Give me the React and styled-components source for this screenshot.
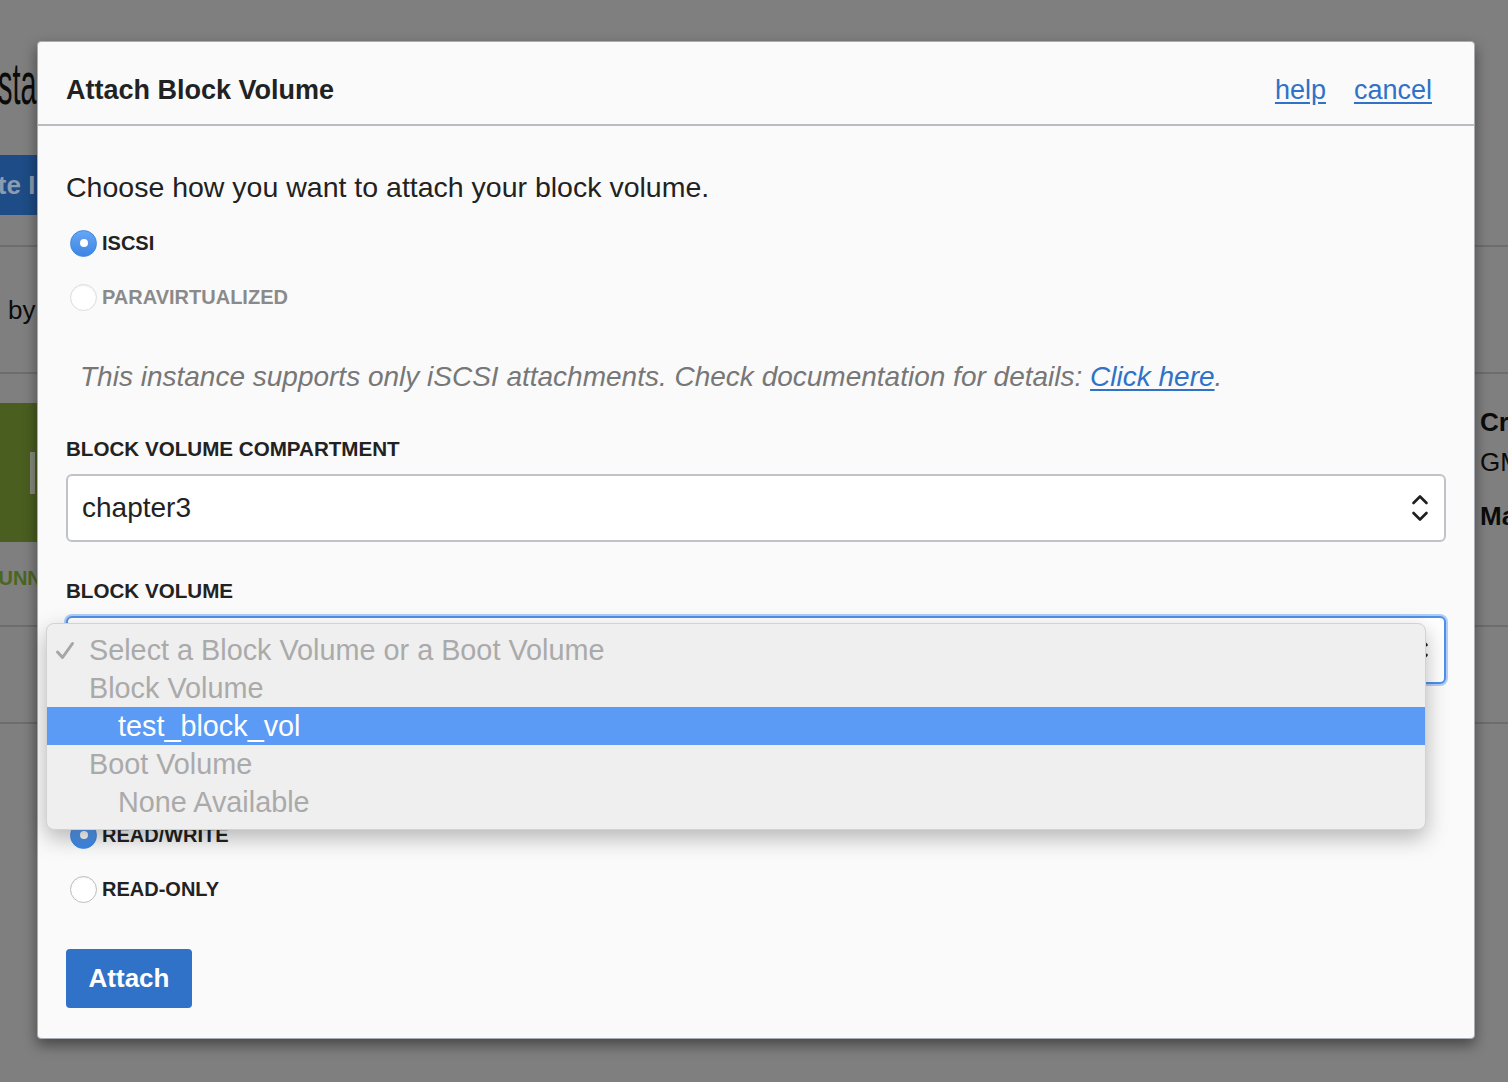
import React from "react";
import styled, { createGlobalStyle } from "styled-components";

const GlobalStyle = createGlobalStyle`
  html, body {
    margin: 0;
    padding: 0;
  }
  body {
    font-family: "Liberation Sans", Arial, Helvetica, sans-serif;
    background: #7f7f7f;
  }
  * {
    box-sizing: border-box;
  }
`;

/* ---------- dimmed page behind the dialog ---------- */

const Page = styled.div`
  position: relative;
  width: 1508px;
  height: 1082px;
  overflow: hidden;
  background: #7f7f7f;
  color: #0b0b0b;
`;

const PageSection = styled.section`
  height: ${(p) => p.$height}px;
  border-bottom: 2px solid #6d6d6d;
  display: flex;
  flex-direction: column;
`;

const PageHeading = styled.h1`
  margin: 54px 0 0 -26px;
  font-size: 60px;
  line-height: 60px;
  font-weight: 400;
  white-space: nowrap;
  transform: scaleX(0.48);
  transform-origin: left center;
`;

const PageButton = styled.div`
  margin: 41px 0 0 -76px;
  width: 260px;
  height: 60px;
  padding: 0 16px;
  display: flex;
  align-items: center;
  background: #1d4c86;
  color: #8d9bb0;
  font-size: 26px;
  font-weight: 700;
  white-space: nowrap;
`;

const PageText = styled.div`
  margin: ${(p) => p.$margin || "0"};
  font-size: ${(p) => p.$size || 26}px;
  line-height: 32px;
  font-weight: ${(p) => (p.$bold ? 700 : 400)};
  color: ${(p) => p.$color || "#0b0b0b"};
  white-space: nowrap;
`;

const DetailGrid = styled.div`
  display: grid;
  grid-template-columns: 1480px 1fr;
  height: 100%;
`;

const Tile = styled.div`
  margin: 29px 0 0 -100px;
  width: 160px;
  height: 139px;
  background: #4a5e20;
  display: flex;
  align-items: center;
  padding-left: 130px;
`;

const TileBar = styled.div`
  width: 5px;
  height: 42px;
  background: #858a7c;
`;

/* ---------- dialog ---------- */

const Modal = styled.div`
  position: absolute;
  left: 37px;
  top: 41px;
  width: 1438px;
  height: 998px;
  background: #fafafa;
  border: 1px solid #a9adb3;
  border-radius: 4px;
  box-shadow: 0 6px 14px rgba(0, 0, 0, 0.45);
  color: #222;
`;

const ModalHeader = styled.header`
  height: 84px;
  padding: 31px 42px 0 28px;
  border-bottom: 2px solid #b9bcc1;
  display: flex;
  align-items: flex-start;
  justify-content: space-between;
`;

const ModalTitle = styled.h2`
  margin: 0;
  font-size: 27px;
  line-height: 34px;
  font-weight: 700;
  color: #222;
`;

const HeaderLinks = styled.nav`
  display: flex;
  gap: 28px;
`;

const TextLink = styled.a`
  font-size: 27px;
  line-height: 34px;
  color: #2f72c8;
  text-decoration: underline;
  text-underline-offset: 3px;
  cursor: pointer;
`;

const ModalBody = styled.div`
  padding: 44px 28px 0 28px;
  display: flex;
  flex-direction: column;
`;

const Lead = styled.p`
  margin: 0;
  font-size: 28.5px;
  line-height: 34px;
  color: #222;
`;

const RadioGroup = styled.div`
  display: flex;
  flex-direction: column;
  gap: 26px;
  margin-top: ${(p) => p.$top}px;
`;

const RadioRow = styled.label`
  display: flex;
  align-items: center;
  height: 28px;
  padding-left: 4px;
  gap: 5px;
  font-size: 20px;
  font-weight: 700;
  color: ${(p) => (p.$disabled ? "#8a8a8a" : "#222")};
`;

const RadioDot = styled.span`
  width: 27px;
  height: 27px;
  border-radius: 50%;
  flex: none;
  display: flex;
  align-items: center;
  justify-content: center;
  background: ${(p) =>
    p.$checked ? "linear-gradient(#66a6f4, #3d86e4)" : "#fff"};
  border: 1px solid
    ${(p) => (p.$checked ? "#3f86e0" : p.$disabled ? "#dcdcdc" : "#bdbdbd")};
  box-shadow: ${(p) =>
    p.$checked ? "none" : "inset 0 1px 2px rgba(0,0,0,0.06)"};

  &::after {
    content: "";
    display: ${(p) => (p.$checked ? "block" : "none")};
    width: 8px;
    height: 8px;
    border-radius: 50%;
    background: #fff;
  }
`;

const Note = styled.p`
  margin: 49px 0 0 14px;
  font-size: 28px;
  line-height: 34px;
  font-style: italic;
  color: #777;
`;

const NoteLink = styled.a`
  color: #2f72c8;
  text-decoration: underline;
  text-underline-offset: 3px;
`;

const FieldLabel = styled.div`
  margin-top: ${(p) => p.$top}px;
  font-size: 20.6px;
  line-height: 24px;
  font-weight: 700;
  color: #222;
`;

const SelectWrap = styled.div`
  position: relative;
  margin-top: 13px;
`;

const SelectBox = styled.div`
  height: 68px;
  padding: 0 15px 0 14px;
  display: flex;
  align-items: center;
  justify-content: space-between;
  background: #fff;
  border-radius: 6px;
  border: 2px solid ${(p) => (p.$focused ? "#4d90ea" : "#bfc2c7")};
  box-shadow: ${(p) =>
    p.$focused ? "0 0 0 2px rgba(90, 150, 240, 0.45)" : "none"};
  font-size: 28px;
  color: #222;
`;

const Menu = styled.ul`
  position: absolute;
  left: -20px;
  top: 7px;
  width: 1380px;
  margin: 0;
  padding: 7px 0 8px;
  list-style: none;
  background: #efefef;
  border: 1px solid #d2d2d2;
  border-radius: 8px;
  box-shadow: 0 8px 22px rgba(0, 0, 0, 0.28);
  z-index: 2;
`;

const MenuItem = styled.li`
  height: 38px;
  display: flex;
  align-items: center;
  padding-left: ${(p) => (p.$nested ? 71 : 42)}px;
  position: relative;
  font-size: 28.8px;
  color: ${(p) => (p.$active ? "#fff" : "#aaa")};
  background: ${(p) => (p.$active ? "#5b9af5" : "transparent")};
`;

const Check = styled.svg`
  position: absolute;
  left: 8px;
  top: 10px;
`;

const AttachButton = styled.button`
  margin-top: 46px;
  align-self: flex-start;
  width: 126px;
  height: 59px;
  border: none;
  border-radius: 4px;
  background: #2f72c7;
  color: #fff;
  font-family: inherit;
  font-size: 26px;
  font-weight: 700;
  cursor: pointer;
`;

function Chevrons() {
  return (
    <svg width="18" height="32" viewBox="0 0 18 32" fill="none">
      <path
        d="M2.5 11 L9 4.5 L15.5 11"
        stroke="#1f1f1f"
        strokeWidth="2.6"
        strokeLinecap="round"
        strokeLinejoin="round"
      />
      <path
        d="M2.5 21 L9 27.5 L15.5 21"
        stroke="#1f1f1f"
        strokeWidth="2.6"
        strokeLinecap="round"
        strokeLinejoin="round"
      />
    </svg>
  );
}

function CheckMark() {
  return (
    <Check width="20" height="20" viewBox="0 0 20 20" fill="none">
      <path
        d="M2.5 11 L7.5 16.5 L17.5 2.5"
        stroke="#a6a6a6"
        strokeWidth="3"
        strokeLinecap="round"
        strokeLinejoin="round"
      />
    </Check>
  );
}

function Radio({ label, checked, disabled }) {
  return (
    <RadioRow $disabled={disabled}>
      <RadioDot $checked={checked} $disabled={disabled} />
      {label}
    </RadioRow>
  );
}

export default function App() {
  return (
    <>
      <GlobalStyle />
      <Page>
        <PageSection $height={247}>
          <PageHeading>Instance Details</PageHeading>
          <PageButton>Create Image</PageButton>
        </PageSection>
        <PageSection $height={127}>
          <PageText $margin="47px 0 0 8px">by oracle</PageText>
        </PageSection>
        <PageSection $height={253}>
          <DetailGrid>
            <div>
              <Tile>
                <TileBar />
              </Tile>
              <PageText $margin="20px 0 0 -16px" $size={20} $bold $color="#4a6620">
                RUNNING
              </PageText>
            </div>
            <div>
              <PageText $margin="32px 0 0 0" $bold>
                Created
              </PageText>
              <PageText $margin="8px 0 0 0">GMT</PageText>
              <PageText $margin="22px 0 0 0" $bold>
                Make
              </PageText>
            </div>
          </DetailGrid>
        </PageSection>
        <PageSection $height={97} />

        <Modal>
          <ModalHeader>
            <ModalTitle>Attach Block Volume</ModalTitle>
            <HeaderLinks>
              <TextLink>help</TextLink>
              <TextLink>cancel</TextLink>
            </HeaderLinks>
          </ModalHeader>

          <ModalBody>
            <Lead>Choose how you want to attach your block volume.</Lead>
            <RadioGroup $top={25}>
              <Radio label="ISCSI" checked />
              <Radio label="PARAVIRTUALIZED" disabled />
            </RadioGroup>

            <Note>
              This instance supports only iSCSI attachments. Check documentation
              for details: <NoteLink>Click here</NoteLink>.
            </Note>

            <FieldLabel $top={43}>BLOCK VOLUME COMPARTMENT</FieldLabel>
            <SelectWrap>
              <SelectBox>
                chapter3
                <Chevrons />
              </SelectBox>
            </SelectWrap>

            <FieldLabel $top={37}>BLOCK VOLUME</FieldLabel>
            <SelectWrap>
              <SelectBox $focused>
                Select a Block Volume or a Boot Volume
                <Chevrons />
              </SelectBox>
              <Menu>
                <MenuItem>
                  <CheckMark />
                  Select a Block Volume or a Boot Volume
                </MenuItem>
                <MenuItem>Block Volume</MenuItem>
                <MenuItem $nested $active>
                  test_block_vol
                </MenuItem>
                <MenuItem>Boot Volume</MenuItem>
                <MenuItem $nested>None Available</MenuItem>
              </Menu>
            </SelectWrap>

            <FieldLabel $top={87}>ACCESS</FieldLabel>
            <RadioGroup $top={26}>
              <Radio label="READ/WRITE" checked />
              <Radio label="READ-ONLY" />
            </RadioGroup>

            <AttachButton>Attach</AttachButton>
          </ModalBody>
        </Modal>
      </Page>
    </>
  );
}
